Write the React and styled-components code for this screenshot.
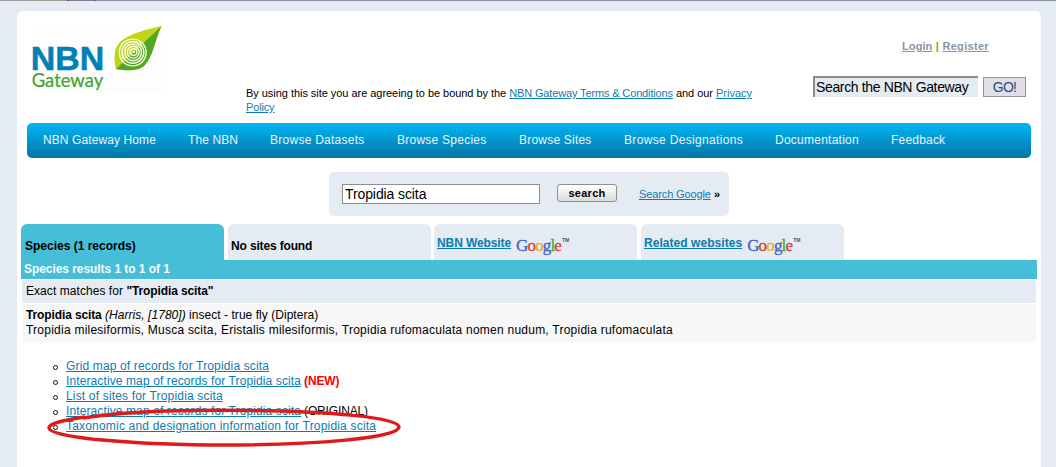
import React from "react";
import styled, { createGlobalStyle } from "styled-components";

const GlobalStyle = createGlobalStyle`
  *, *::before { box-sizing: border-box; }
  html, body { margin: 0; padding: 0; background: #e4ebf3; }
  body {
    font-family: "Liberation Sans", Arial, sans-serif;
    font-size: 12px;
    line-height: 15px;
    letter-spacing: 0.25px;
    color: #000;
    overflow: hidden;
  }
`;

const Page = styled.div`
  width: 1056px;
  height: 467px;
  display: flex;
  flex-direction: column;
`;

const TopEdge = styled.div`
  height: 1px;
  flex: none;
  background: linear-gradient(90deg, #9c9c9c 0 67px, #55555f 67px 69px, #7c7e8a 69px 95px, #55555f 95px 96px, #8b8e9e 96px);
`;

const Panel = styled.main`
  margin: 10px 15px 0 17px;
  flex: 1;
  background: #fff;
  border-radius: 6px 6px 0 0;
`;

const Link = styled.a`
  color: #0a7cae;
  text-decoration: underline;
  text-underline-offset: 1px;
  letter-spacing: ${(p) => p.$ls ?? 0.25}px;
`;

const Header = styled.header`
  height: 112px;
  display: flex;
`;

const LogoSvg = styled.svg`
  display: block;
  margin: 15px 0 0 15px;
  flex: none;
`;

const Terms = styled.div`
  margin: 75px 0 0 84px;
  width: 520px;
  font-size: 11px;
  line-height: 14px;
`;

const Tools = styled.div`
  margin: 28px 0 0 47px;
  width: 213px;
`;

const Account = styled.div`
  padding-left: 89px;
  font-size: 11px;
  font-weight: bold;
  line-height: 14px;
  color: #8ea31f;
  white-space: nowrap;
`;

const AccountLink = styled.a`
  color: #8896a8;
  text-decoration: underline;
  text-underline-offset: 1px;
  letter-spacing: ${(p) => p.$ls}px;
`;

const SiteSearch = styled.form`
  display: flex;
  align-items: flex-start;
  gap: 5px;
  margin-top: 23px;
`;

const SiteInput = styled.div`
  width: 165px;
  height: 21px;
  border-top: 2px solid #8b8b8b;
  border-left: 2px solid #8b8b8b;
  background: #e4ebf3;
  font-size: 14px;
  line-height: 19px;
  padding-left: 1px;
  letter-spacing: ${(p) => p.$ls}px;
  white-space: nowrap;
`;

const GoButton = styled.div`
  margin-top: 1px;
  width: 43px;
  height: 20px;
  border: 1px solid #94949a;
  background: #e0dfe6;
  color: #2a4a86;
  font-size: 14px;
  line-height: 19px;
  text-align: center;
  letter-spacing: -0.7px;
`;

const Nav = styled.nav`
  margin: 0 10px;
  padding-left: 16px;
  height: 35px;
  border-radius: 5px;
  background: linear-gradient(#00b6f4, #0274a5);
  display: flex;
  gap: 32px;
`;

const NavItem = styled.a`
  width: ${(p) => p.$w}px;
  color: #e9f6fc;
  line-height: 34px;
  white-space: nowrap;
  letter-spacing: ${(p) => p.$ls}px;
`;

const SearchBox = styled.section`
  margin: 14px 0 0 312px;
  width: 400px;
  height: 44px;
  border-radius: 5px;
  background: #e4ebf3;
  padding: 12px 0 0 13px;
  display: flex;
  align-items: flex-start;
`;

const SpeciesInput = styled.div`
  width: 198px;
  height: 20px;
  border: 1px solid #8e8e8e;
  background: #fff;
  font-size: 14px;
  line-height: 19px;
  padding-left: 2px;
  letter-spacing: -0.1px;
`;

const SearchButton = styled.div`
  margin-left: 17px;
  width: 60px;
  height: 18px;
  border: 1px solid #8e8e8e;
  border-radius: 3px;
  background: linear-gradient(#fff, #dcdcdc);
  font-size: 11px;
  font-weight: bold;
  line-height: 16px;
  text-align: center;
`;

const GoogleSearch = styled.div`
  margin: 3px 0 0 22px;
  font-size: 11px;
  line-height: 14px;
  letter-spacing: 0;
  white-space: nowrap;
`;

const Tabs = styled.div`
  margin: 8px 0 0 4px;
  display: flex;
  height: 36px;
`;

const Tab = styled.div`
  width: 203px;
  margin-right: ${(p) => p.$gap ?? 4}px;
  border-radius: 6px 6px 0 0;
  background: ${(p) => (p.$active ? "#47bed8" : "#e4ebf3")};
  padding: ${(p) => (p.$link ? 12 : 15)}px 0 0 ${(p) => (p.$active ? 4 : 3)}px;
  font-weight: bold;
  letter-spacing: ${(p) => p.$ls ?? 0}px;
  display: flex;
  white-space: nowrap;
`;

const GoogleMark = styled.span`
  margin-left: 5px;
  font: 17px/19px "Liberation Serif", serif;
  letter-spacing: -0.85px;
  display: flex;
  -webkit-text-stroke: 0.3px;
`;

const Letter = styled.span`
  color: ${(p) => p.$c};
`;

const Tm = styled.span`
  font: bold 5px/9px "Liberation Sans", sans-serif;
  color: #555;
  letter-spacing: 0;
  -webkit-text-stroke: 0;
  padding-left: 1px;
`;

const ResultsTitle = styled.h2`
  margin: 0 4px;
  height: 19px;
  background: #47bed8;
  color: #f4fbfd;
  font-size: 12px;
  line-height: 18px;
  font-weight: bold;
  padding-left: 3px;
  letter-spacing: -0.06px;
`;

const Row = styled.div`
  margin: 1px 5px 0;
  height: ${(p) => p.$h}px;
  background: ${(p) => p.$bg};
  padding: 4px 0 0 4px;
  white-space: nowrap;
`;

const Line = styled.div`
  letter-spacing: ${(p) => p.$ls}px;
`;

const Name = styled.b`
  letter-spacing: -0.12px;
`;

const Records = styled.div`
  position: relative;
  padding-top: 17px;
`;

const List = styled.ul`
  margin: 0;
  padding: 0 0 0 36px;
  list-style: none;
`;

const Item = styled.li`
  display: flex;
  height: 15px;
  white-space: nowrap;
  &::before {
    content: "";
    width: 5px;
    height: 5px;
    margin: 6px 8px 0 0;
    border: 1px solid #111;
    border-radius: 50%;
  }
`;

const Note = styled.span`
  margin-left: 3px;
  letter-spacing: -0.15px;
  color: ${(p) => (p.$fresh ? "#f00" : "#000")};
  font-weight: ${(p) => (p.$fresh ? "bold" : "normal")};
`;

const Ring = styled.svg`
  position: absolute;
  left: 28px;
  top: 62px;
`;

function Logo() {
  return (
    <LogoSvg width="130" height="68" viewBox="0 0 130 68">
      <rect width="130" height="66" fill="#fdfdfd" />
      <text x="-1.2" y="43.600" fontFamily="Liberation Sans, Arial, sans-serif" fontWeight="bold" fontSize="33" textLength="73.500" lengthAdjust="spacingAndGlyphs" fill="#0080b6" stroke="#0080b6" strokeWidth="0.500" letterSpacing="0">NBN</text>
      <text x="-0.300" y="61" fontFamily="Lato, sans-serif" fontSize="19" textLength="71.500" lengthAdjust="spacingAndGlyphs" fill="#45a52a" stroke="#45a52a" strokeWidth="0.250" letterSpacing="0">Gateway</text>
      <path d="M129.500 0 C117 3 97 7.500 88.500 15.500 C81 23 82 34 84 43 C92 44.500 106 46 113 39 C121 30 123 14 129.500 0Z" fill="#bfd618" />
      <path d="M129.500 0 C123 14 121 30 113 39 C106 46 92 44.500 84 43Z" fill="#4fa81f" />
      <g fill="none" stroke="#f8fbe8" strokeWidth="1.400">
        <circle cx="100.700" cy="26.500" r="13.400" />
        <circle cx="100.900" cy="26.400" r="10.900" />
        <circle cx="101.100" cy="26.300" r="8.400" />
        <circle cx="101.300" cy="26.200" r="5.900" />
        <circle cx="101.600" cy="26.100" r="3.400" />
      </g>
      <circle cx="101.800" cy="26" r="1.300" fill="#f8fbe8" />
    </LogoSvg>
  );
}

function Google() {
  const colors = ["#3f62c4", "#d8402c", "#e3b01c", "#3f62c4", "#3fae3a", "#d8402c"];
  return (
    <GoogleMark>
      <span>
        {"Google".split("").map((l, i) => (
          <Letter key={i} $c={colors[i]}>{l}</Letter>
        ))}
      </span>
      <Tm>TM</Tm>
    </GoogleMark>
  );
}

const navItems = [
  ["NBN Gateway Home", 113, 0.1],
  ["The NBN", 50, 0.1],
  ["Browse Datasets", 95, 0.26],
  ["Browse Species", 90, 0.25],
  ["Browse Sites", 73, 0.21],
  ["Browse Designations", 119, 0.33],
  ["Documentation", 84, 0.25],
  ["Feedback", 54, 0.2],
];

export default function App() {
  return (
    <Page>
      <GlobalStyle />
      <TopEdge />
      <Panel>
        <Header>
          <Logo />
          <Terms>
            <Line $ls={-0.04}>
              By using this site you are agreeing to be bound by the{" "}
              <Link $ls={-0.14}>NBN Gateway Terms &amp; Conditions</Link> and our{" "}
              <Link $ls={0}>Privacy</Link>
            </Line>
            <Line $ls={0}>
              <Link $ls={-0.15}>Policy</Link>
            </Line>
          </Terms>
          <Tools>
            <Account>
              <AccountLink $ls={0.1}>Login</AccountLink> | <AccountLink $ls={0.32}>Register</AccountLink>
            </Account>
            <SiteSearch>
              <SiteInput $ls={-0.36}>Search the NBN Gateway</SiteInput>
              <GoButton>GO!</GoButton>
            </SiteSearch>
          </Tools>
        </Header>
        <Nav>
          {navItems.map(([label, w, ls]) => (
            <NavItem key={label} $w={w} $ls={ls}>{label}</NavItem>
          ))}
        </Nav>
        <SearchBox>
          <SpeciesInput>Tropidia scita</SpeciesInput>
          <SearchButton>search</SearchButton>
          <GoogleSearch>
            <Link $ls={-0.12}>Search Google</Link> <b>»</b>
          </GoogleSearch>
        </SearchBox>
        <Tabs>
          <Tab $active>Species (1 records)</Tab>
          <Tab $gap={3} $ls={-0.15}>No sites found</Tab>
          <Tab $link><Link $ls={-0.1}>NBN Website</Link><Google /></Tab>
          <Tab $link><Link $ls={0.05}>Related websites</Link><Google /></Tab>
        </Tabs>
        <ResultsTitle>Species results 1 to 1 of 1</ResultsTitle>
        <Row $h={23} $bg="#e4ebf3">
          <Line $ls={0.06}>Exact matches for <Name>"Tropidia scita"</Name></Line>
        </Row>
        <Row $h={38} $bg="#f7f7f7">
          <Line $ls={0.04}><Name>Tropidia scita</Name> <i>(Harris, [1780])</i> insect - true fly (Diptera)</Line>
          <Line $ls={0.24}>Tropidia milesiformis, Musca scita, Eristalis milesiformis, Tropidia rufomaculata nomen nudum, Tropidia rufomaculata</Line>
        </Row>
        <Records>
          <List>
            <Item><Link $ls={0.15}>Grid map of records for Tropidia scita</Link></Item>
            <Item><Link $ls={0.11}>Interactive map of records for Tropidia scita</Link><Note $fresh>(NEW)</Note></Item>
            <Item><Link $ls={0.17}>List of sites for Tropidia scita</Link></Item>
            <Item><Link $ls={0.11}>Interactive map of records for Tropidia scita</Link><Note>(ORIGINAL)</Note></Item>
            <Item><Link $ls={0.19}>Taxonomic and designation information for Tropidia scita</Link></Item>
          </List>
          <Ring width="360" height="46" viewBox="0 0 360 46" fill="none">
            <path d="M38 14 C80 7 150 5.500 210 6.500 C280 7.500 354 13 354 23 C354 34 270 41 180 41 C95 41 4 34 4 24 C4 19 20 16 40 13" stroke="#e01a1a" strokeWidth="3.500" />
          </Ring>
        </Records>
      </Panel>
    </Page>
  );
}
